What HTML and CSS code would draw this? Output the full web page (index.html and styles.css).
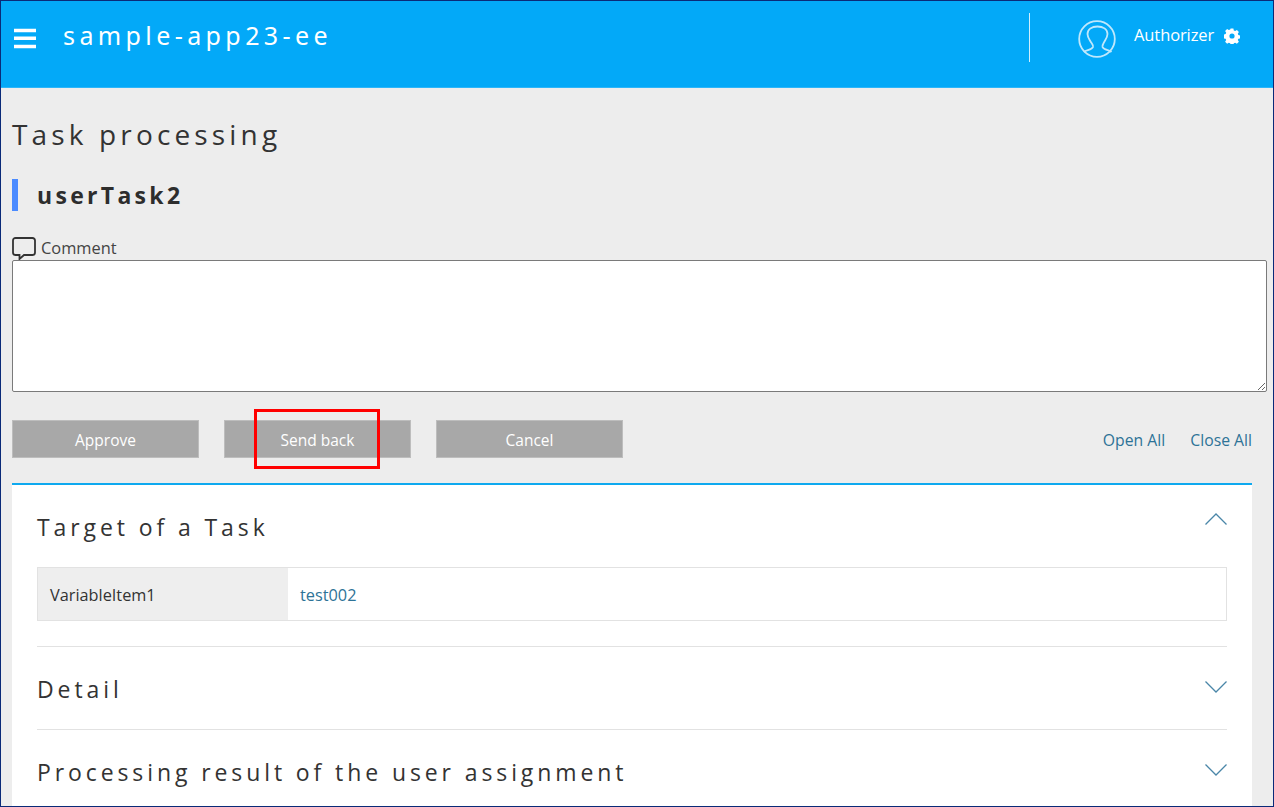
FILE: index.html
```html
<!DOCTYPE html>
<html lang="en">
<head>
<meta charset="utf-8">
<title>Task processing</title>
<link rel="stylesheet" href="styles.css">
</head>
<body>
<div class="frame">
  <header class="topbar">
    <svg class="menu-icon" width="22" height="21" viewBox="0 0 22 21"><path d="M0 2.500h22M0 10.200h22M0 18.500h22" stroke="#fff" stroke-width="3.400"/></svg>
    <div class="app-name">sample-app23-ee</div>
    <div class="user-area">
      <svg class="avatar" width="38" height="38" viewBox="0 0 38 38" fill="none" stroke="#bfe8fc" stroke-width="1.800"><circle cx="19" cy="19" r="17.800"/><path d="M6 32c2-2 8-2 9-5 .5-2-1-3-2.500-5.500C11 19 9.500 17 9.500 14 9.500 9 14 6.500 19.500 6.500S29.500 9 29.500 14c0 3-1.500 5-3 7.500C25 24 24 25 24.500 27c1 3 7 3 9 5"/></svg>
      <span class="user-name">Authorizer</span>
      <svg class="gear" width="16" height="16" viewBox="0 0 16 16"><path fill="#fff" fill-rule="evenodd" d="M6.600.5h2.800l.4 2 1.400.6 1.700-1.100 2 2-1.100 1.700.6 1.400 2 .4v2.800l-2 .4-.6 1.400 1.100 1.700-2 2-1.700-1.100-1.400.6-.4 2H6.600l-.4-2-1.400-.6-1.700 1.100-2-2 1.100-1.700-.6-1.400-2-.4V6.500l2-.4.6-1.400L1.100 3l2-2 1.700 1.100 1.400-.6zM8 5.400a2.600 2.600 0 1 0 0 5.200 2.600 2.600 0 0 0 0-5.200z"/></svg>
    </div>
  </header>
  <main class="content">
    <h1 class="page-title">Task processing</h1>
    <h2 class="task-name">userTask2</h2>
    <div class="comment-label">
      <svg width="24" height="23" viewBox="0 0 24 23" fill="none" stroke="#333" stroke-width="1.800"><path d="M3.500 1h17a2.500 2.500 0 0 1 2.500 2.500v12a2.500 2.500 0 0 1-2.500 2.500H12l-4.500 4v-4h-4A2.500 2.500 0 0 1 1 15.500v-12A2.500 2.500 0 0 1 3.500 1z"/></svg>
      <span>Comment</span>
    </div>
    <textarea class="comment-box"></textarea>
    <div class="actions">
      <button class="btn" type="button">Approve</button>
      <button class="btn" type="button">Send back</button>
      <button class="btn" type="button">Cancel</button>
      <div class="toggles">
        <a class="link">Open All</a>
        <a class="link">Close All</a>
      </div>
      <div class="highlight"></div>
    </div>
    <section class="panel">
      <div class="acc acc-open">
        <div class="acc-head">
          <h3 class="acc-title">Target of a Task</h3>
          <svg class="chev chev-up" width="22" height="12" viewBox="0 0 22 12" fill="none" stroke="#4a86a8" stroke-width="1.300"><path d="M.5 11.500L11 1l10.500 10.500"/></svg>
        </div>
        <div class="row">
          <div class="row-key">VariableItem1</div>
          <div class="row-val">test002</div>
        </div>
      </div>
      <div class="acc">
        <div class="acc-head">
          <h3 class="acc-title">Detail</h3>
          <svg class="chev" width="22" height="12" viewBox="0 0 22 12" fill="none" stroke="#4a86a8" stroke-width="1.300"><path d="M.5.500L11 11 21.500.500"/></svg>
        </div>
      </div>
      <div class="acc">
        <div class="acc-head">
          <h3 class="acc-title">Processing result of the user assignment</h3>
          <svg class="chev" width="22" height="12" viewBox="0 0 22 12" fill="none" stroke="#4a86a8" stroke-width="1.300"><path d="M.5.500L11 11 21.500.500"/></svg>
        </div>
      </div>
    </section>
  </main>
</div>
</body>
</html>
```
FILE: styles.css
```css
* { box-sizing: border-box; }
html, body { margin: 0; padding: 0; height: 100%; overflow: hidden; }
body { font-family: "Open Sans", "Noto Sans", sans-serif; color: #333; }
.frame { width: 1274px; height: 807px; border: 1px solid #0a2a78; background: #ededed; overflow: hidden; display: flex; flex-direction: column; }

.topbar { height: 87px; flex: none; background: #03a9f8; border-bottom: 1px solid #2cb6fa; display: flex; align-items: flex-start; color: #fff; }
.menu-icon { margin: 27px 0 0 13px; flex: none; }
.app-name { margin: 18px 0 0 27px; font-family: "Noto Sans", sans-serif; font-size: 25px; line-height: 33px; letter-spacing: 4.4px; }
.user-area { margin-left: auto; width: 243px; height: 49px; margin-top: 12px; margin-right: 1px; border-left: 1px solid #cfeefd; display: flex; align-items: flex-start; }
.avatar { margin: 7px 0 0 48px; flex: none; }
.user-name { margin: 11px 0 0 18px; font-size: 16.5px; line-height: 22px; letter-spacing: -0.1px; }
.gear { margin: 15px 0 0 10px; flex: none; }

.content { flex: 1; padding: 0 6px 0 11px; display: flex; flex-direction: column; min-height: 0; }
.page-title { margin: 27px 0 0; font-size: 28px; line-height: 38px; font-weight: 400; letter-spacing: 4.15px; color: #333; }
.task-name { margin: 26px 0 0; height: 32px; border-left: 6px solid #4b8bff; padding-left: 19px; font-size: 23px; line-height: 33px; font-weight: 700; letter-spacing: 3.3px; color: #2d2d2d; }
.comment-label { margin-top: 26px; height: 23px; display: flex; align-items: flex-start; font-size: 16.4px; line-height: 22px; color: #444; }
.comment-label svg { flex: none; }
.comment-label span { margin: 0 0 0 5px; }
.comment-box { display: block; width: 1255px; height: 132px; flex: none; margin: 0; padding: 4px; border: 1px solid #7a7a7a; border-radius: 2px; background: #fff; resize: both; }

.actions { position: relative; margin-top: 28px; height: 38px; width: 1240px; flex: none; display: flex; align-items: flex-start; gap: 25px; }
.btn { width: 187px; height: 38px; margin: 0; padding: 1px 0 0; border: 1px solid #bdbdbd; background: #a8a8a8; color: #fff; font-family: inherit; font-size: 15.5px; line-height: 20px; }
.toggles { margin-left: auto; display: flex; gap: 25px; padding-top: 10px; }
.link { color: #2e7397; font-size: 15.75px; line-height: 21px; }
.highlight { position: absolute; left: 242px; top: -11px; width: 126px; height: 60px; border: 3px solid #ff0000; }

.panel { margin-top: 25px; width: 1240px; flex: 1; background: #fff; border-top: 2px solid #0ea9ef; padding: 0 25px; }
.acc { border-top: 1px solid #e2e2e2; }
.acc-open { border-top: 0; padding-bottom: 25px; }
.acc-head { height: 82px; padding-top: 2px; display: flex; align-items: center; justify-content: space-between; }
.acc-title { margin: 0; font-size: 23px; line-height: 31px; font-weight: 400; letter-spacing: 3.9px; color: #333; }
.chev { flex: none; margin: -4px 0 0 0; }
.chev-up { margin-top: -17px; }

.row { display: flex; height: 54px; border: 1px solid #e2e2e2; font-size: 16.3px; line-height: 54px; }
.row-key { width: 250px; padding-left: 12px; background: #eeeeee; color: #333; flex: none; }
.row-val { padding-left: 12px; color: #2e7397; flex: 1; }
```
